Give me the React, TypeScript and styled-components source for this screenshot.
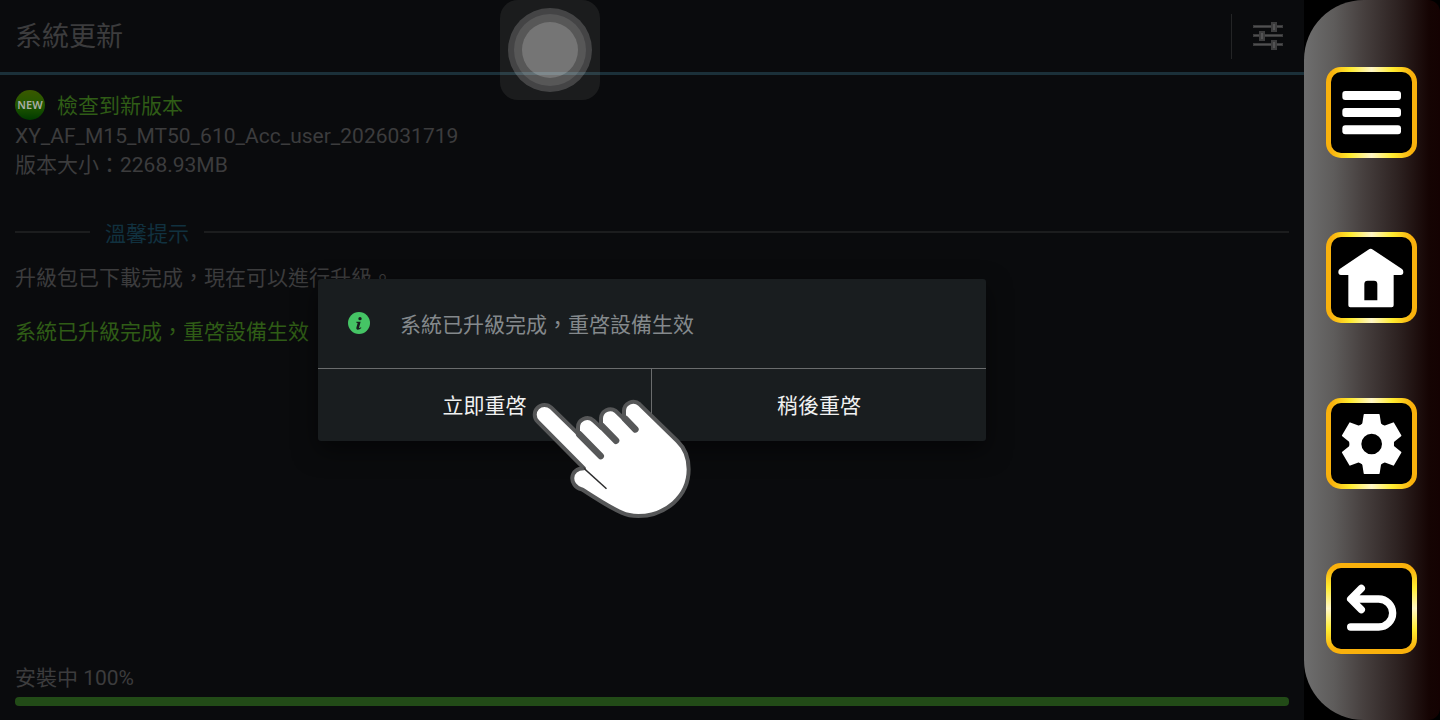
import React from "react";
import styled, { createGlobalStyle } from "styled-components";

const GlobalStyle = createGlobalStyle`
  *, *::before, *::after { box-sizing: border-box; }
  body {
    margin: 0;
    background: #000;
    font-family: Roboto, "Noto Sans CJK TC", sans-serif;
    font-size: 21px;
    line-height: 30px;
  }
  button { font: inherit; color: inherit; background: none; border: 0; padding: 0; cursor: pointer; }
  h1, h2, p { margin: 0; font-size: inherit; font-weight: 400; }
`;

const Device = styled.div`
  display: flex;
  min-height: 100vh;
`;

const Screen = styled.main`
  position: relative;
  flex: 1;
  min-width: 0;
  display: flex;
  flex-direction: column;
  background: #0a0b0d;
  color: #3c3c3d;
`;

const TitleBar = styled.header`
  display: flex;
  align-items: center;
  height: 75px;
  padding-left: 15px;
  border-bottom: 3px solid #1b3039;
`;

const Title = styled.h1`
  flex: 1;
  padding-top: 2px;
  && { font-size: 27px; }
`;

const SettingsButton = styled.button`
  display: flex;
  align-items: center;
  justify-content: center;
  width: 73px;
  height: 45px;
  && { border-left: 1px solid #242526; }
`;

const Content = styled.div`
  flex: 1;
  display: flex;
  flex-direction: column;
  padding: 15px 15px 14px;
`;

const VersionHeading = styled.div`
  display: flex;
  align-items: center;
  gap: 12px;
  height: 30px;

  h2 { padding-top: 2px; }
`;

const NewBadge = styled.span`
  width: 30px;
  height: 30px;
  border-radius: 50%;
  background: linear-gradient(#3a5800, #225800 50%, #003a00);
  color: #a9ada5;
  font-family: "Noto Sans", sans-serif;
  font-size: 11px;
  font-weight: 600;
  text-align: center;
`;

const Line = styled.p<{ $accent?: boolean }>`
  color: ${(p) => (p.$accent ? "#2f5c16" : "inherit")};
`;

const VersionInfo = styled.div`
  margin-top: 2px;
  line-height: 29px;
`;

const TipHeading = styled.div`
  display: flex;
  align-items: center;
  gap: 15px;
  height: 30px;
  margin: 37px 0 16px;
  color: #11313f;

  h2 { padding-top: 4px; }

  &::before, &::after {
    content: "";
    height: 2px;
    background: #1c1d1e;
  }
  &::before { width: 75px; }
  &::after { flex: 1; }
`;

const Notes = styled.div`
  display: flex;
  flex-direction: column;
  gap: 24px;
`;

const Install = styled.div`
  display: flex;
  flex-direction: column;
  gap: 4px;
  margin-top: auto;
`;

const Progress = styled.progress`
  appearance: none;
  display: block;
  width: 100%;
  height: 9px;
  border: 0;
  border-radius: 4px;
  overflow: hidden;
  background: #17181a;
  &::-webkit-progress-bar { background: #17181a; }
  &::-webkit-progress-value { background: #224b17; }
`;

const Overlay = styled.div`
  position: absolute;
  inset: 0;
  display: flex;
  align-items: center;
  justify-content: center;
`;

const Dialog = styled.section`
  position: relative;
  width: 668px;
  max-width: 100%;
  border-radius: 3px;
  background: #191d1f;
  box-shadow: 0 9px 24px rgba(0, 0, 0, 0.5);
`;

const DialogMessage = styled.div`
  display: flex;
  align-items: center;
  gap: 30px;
  height: 89px;
  padding: 0 30px 1px;
  color: #84898c;

  p { padding-top: 3px; }
`;

const DialogActions = styled.div`
  display: flex;
  border-top: 1px solid #6a6c6d;
`;

const DialogButton = styled.button`
  width: 50%;
  height: 72px;
  && { color: #f0f1f1; padding-top: 2px; }
  &&:first-child { border-right: 1px solid #6a6c6d; }
`;

const Pointer = styled.svg`
  position: absolute;
  left: 212px;
  top: 117px;
  pointer-events: none;
`;

const AssistButton = styled.button`
  position: absolute;
  top: 0;
  left: 500px;
  display: flex;
  width: 100px;
  height: 100px;
  border-radius: 18px;
  && { background: rgba(255, 250, 236, 0.07); }
`;

const Rail = styled.nav`
  display: flex;
  flex-direction: column;
  align-items: flex-start;
  justify-content: space-between;
  gap: 30px;
  width: 136px;
  padding: 67px 0 66px 22px;
  border-radius: 60px 12px 12px 60px;
  background: linear-gradient(90deg, #6e6e6e, #5e5c5b 22%, #463f3e 44%, #2c2120 70%, #150403 92%, #140202);
`;

const RailButton = styled.button<{ $angle: number }>`
  display: flex;
  width: 91px;
  height: 91px;
  border-radius: 15px;
  && {
    border: 5px solid transparent;
    background:
      linear-gradient(#000, #000) padding-box,
      linear-gradient(${(p) => p.$angle}deg, #f9b10c 6%, #ffec30 27%, #fff7c8 50%, #ffec30 73%, #f9b10c 94%) border-box;
  }
`;

const SlidersIcon = () => (
  <svg width="30" height="28" viewBox="0 0 90 84" aria-hidden="true">
    {[
      [9, 54],
      [36, 18],
      [63, 54],
    ].map(([y, x]) => (
      <g key={y}>
        <rect y={y} width="90" height="9" fill="#3a3a3b" />
        <rect x="3" y={y + 3} width="84" height="3" fill="#505051" />
        <rect x={x} y={y - 9} width="18" height="30" fill="#3c3c3d" />
        <rect x={x + 6} y={y - 3} width="6" height="18" fill="#535354" />
      </g>
    ))}
  </svg>
);

const InfoIcon = () => (
  <svg width="22" height="22" viewBox="0 0 66 66" aria-hidden="true">
    <circle cx="33" cy="33" r="33" fill="#45c465" />
    <circle cx="36" cy="20" r="5" fill="#1a1d1f" />
    <path d="M25 29 H38 L33 47 Q33 50 39 46 L40 48 Q34 54 28 53 Q24 52 25 47 L29 33 L25 32 Z" fill="#1a1d1f" />
  </svg>
);

const AssistIcon = () => (
  <svg width="100" height="100" viewBox="0 0 100 100" aria-hidden="true" fill="#fff">
    <circle cx="50" cy="50" r="42" fillOpacity="0.18" />
    <circle cx="50" cy="50" r="36" fillOpacity="0.1" />
    <circle cx="50" cy="50" r="28" fillOpacity="0.18" />
  </svg>
);

const HandPointer = () => (
  <Pointer width="164" height="124" viewBox="660 378 492 372" aria-hidden="true">
    <path
      d="M822 595 L683 455 A29 29 0 0 1 724 413 L804 491 V474 A28 28 0 0 1 851 452 L873 473 V444 A28 28 0 0 1 917 423 L942 447 V425 A28 28 0 0 1 989 403 L1102 513 C1125 535 1136 565 1136 598 C1136 680 1065 738 985 738 C965 738 950 735 935 728 C890 708 855 682 815 658 C775 647 778 595 822 595 Z"
      fill="#fff"
      stroke="#565758"
      strokeWidth="12"
      strokeLinejoin="round"
    />
    <g stroke="#565758" strokeWidth="20" strokeLinecap="round">
      <path d="M808 493 L872 558" />
      <path d="M874 467 L918 512" />
      <path d="M945 446 L976 478" />
    </g>
    <path d="M820 590 L891 655 L888 658 L824 600 Z" fill="#2c2c2d" />
  </Pointer>
);

const MenuIcon = () => (
  <g>
    <rect x="34" y="57" width="176" height="27" rx="9" />
    <rect x="34" y="108" width="176" height="27" rx="9" />
    <rect x="34" y="160" width="176" height="27" rx="9" />
  </g>
);

const HomeIcon = () => (
  <path
    fillRule="evenodd"
    d="M112 38 Q119 32 126 38 L213 96 Q217 99 217 105 Q217 114 209 114 H188 V205 Q188 211 182 211 H58 Q52 211 52 205 V114 H30 Q22 114 22 105 Q22 99 26 96 Z M100 190 H139 V141 Q139 131 129 131 H110 Q100 131 100 141 Z"
  />
);

const GearIcon = () => (
  <g transform="translate(122 123)">
    <circle r="49" fill="none" stroke="#fff" strokeWidth="36" />
    {[0, 60, 120, 180, 240, 300].map((a) => (
      <path key={a} transform={`rotate(${a})`} d="M-22 -90 H22 Q24 -90 24 -88 L28 -62 L36 -50 H-36 L-28 -62 L-24 -88 Q-24 -90 -22 -90 Z" />
    ))}
  </g>
);

const BackIcon = () => (
  <path
    d="M91 61 L59 93 L91 125 M60 93 H143 A42 42 0 0 1 143 177 H59"
    fill="none"
    stroke="#fff"
    strokeWidth="22"
    strokeLinecap="round"
    strokeLinejoin="round"
  />
);

const railItems = [
  { label: "選單", angle: 90, Icon: MenuIcon },
  { label: "主頁", angle: 90, Icon: HomeIcon },
  { label: "設定", angle: 90, Icon: GearIcon },
  { label: "返回", angle: 180, Icon: BackIcon },
];

export default function App() {
  return (
    <>
      <GlobalStyle />
      <Device>
        <Screen>
          <TitleBar>
            <Title>系統更新</Title>
            <SettingsButton aria-label="更新設定">
              <SlidersIcon />
            </SettingsButton>
          </TitleBar>
          <Content>
            <VersionHeading>
              <NewBadge>NEW</NewBadge>
              <Line as="h2" $accent>檢查到新版本</Line>
            </VersionHeading>
            <VersionInfo>
              <Line>XY_AF_M15_MT50_610_Acc_user_2026031719</Line>
              <Line>版本大小：2268.93MB</Line>
            </VersionInfo>
            <TipHeading>
              <h2>溫馨提示</h2>
            </TipHeading>
            <Notes>
              <Line>升級包已下載完成，現在可以進行升級。</Line>
              <Line $accent>系統已升級完成，重啓設備生效</Line>
            </Notes>
            <Install>
              <label htmlFor="install-progress">安裝中 100%</label>
              <Progress id="install-progress" value={100} max={100} />
            </Install>
          </Content>
          <Overlay>
            <Dialog role="dialog" aria-labelledby="dialog-message">
              <DialogMessage>
                <InfoIcon />
                <p id="dialog-message">系統已升級完成，重啓設備生效</p>
              </DialogMessage>
              <DialogActions>
                <DialogButton>立即重啓</DialogButton>
                <DialogButton>稍後重啓</DialogButton>
              </DialogActions>
              <HandPointer />
            </Dialog>
          </Overlay>
          <AssistButton aria-label="輔助觸控">
            <AssistIcon />
          </AssistButton>
        </Screen>
        <Rail>
          {railItems.map(({ label, angle, Icon }) => (
            <RailButton key={label} aria-label={label} $angle={angle}>
              <svg width="81" height="81" viewBox="0 0 243 243" fill="#fff" aria-hidden="true">
                <Icon />
              </svg>
            </RailButton>
          ))}
        </Rail>
      </Device>
    </>
  );
}
